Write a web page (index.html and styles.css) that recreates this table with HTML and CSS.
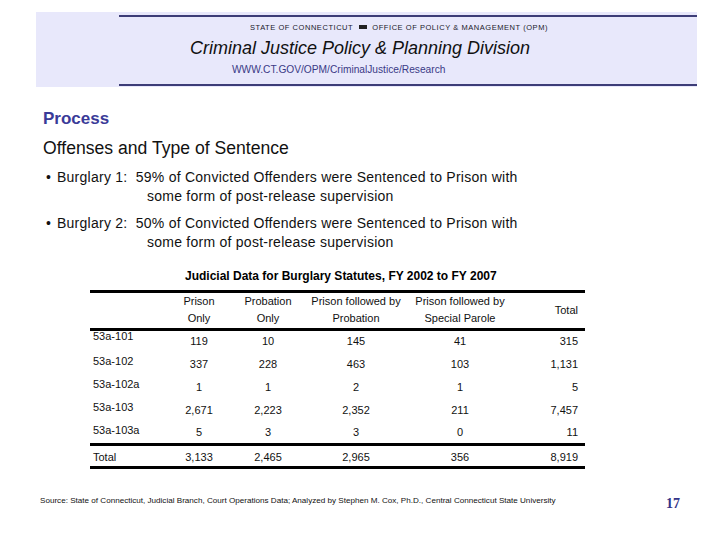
FILE: index.html
```html
<!DOCTYPE html>
<html>
<head>
<meta charset="utf-8">
<link rel="stylesheet" href="styles.css">
</head>
<body>
<div class="slide">
  <header class="band">
    <div class="band-inner">
      <div class="agency">STATE OF CONNECTICUT <span class="sq"></span> OFFICE OF POLICY &amp; MANAGEMENT (OPM)</div>
      <div class="division">Criminal Justice Policy &amp; Planning Division</div>
      <div class="url">WWW.CT.GOV/OPM/CriminalJustice/Research</div>
    </div>
  </header>

  <main class="content">
    <h1 class="process">Process</h1>
    <h2 class="subtitle">Offenses and Type of Sentence</h2>
    <ul class="bullets">
      <li><span class="dot">•</span><span class="btext">Burglary 1:&nbsp; 59% of Convicted Offenders were Sentenced to Prison with<br><span class="cont">some form of post-release supervision</span></span></li>
      <li><span class="dot">•</span><span class="btext">Burglary 2:&nbsp; 50% of Convicted Offenders were Sentenced to Prison with<br><span class="cont">some form of post-release supervision</span></span></li>
    </ul>

    <div class="table-title">Judicial Data for Burglary Statutes, FY 2002 to FY 2007</div>
    <table class="data">
      <colgroup>
        <col class="c1"><col class="c2"><col class="c3"><col class="c4"><col class="c5"><col class="c6">
      </colgroup>
      <thead>
        <tr>
          <th></th>
          <th>Prison<br>Only</th>
          <th>Probation<br>Only</th>
          <th>Prison followed by<br>Probation</th>
          <th>Prison followed by<br>Special Parole</th>
          <th class="tot">Total</th>
        </tr>
      </thead>
      <tbody>
        <tr class="first"><td class="lbl">53a-101</td><td>119</td><td>10</td><td>145</td><td>41</td><td class="tot">315</td></tr>
        <tr><td class="lbl">53a-102</td><td>337</td><td>228</td><td>463</td><td>103</td><td class="tot">1,131</td></tr>
        <tr><td class="lbl">53a-102a</td><td>1</td><td>1</td><td>2</td><td>1</td><td class="tot">5</td></tr>
        <tr><td class="lbl">53a-103</td><td>2,671</td><td>2,223</td><td>2,352</td><td>211</td><td class="tot">7,457</td></tr>
        <tr><td class="lbl">53a-103a</td><td>5</td><td>3</td><td>3</td><td>0</td><td class="tot">11</td></tr>
      </tbody>
      <tfoot>
        <tr><td class="lbl total-lbl">Total</td><td>3,133</td><td>2,465</td><td>2,965</td><td>356</td><td class="tot">8,919</td></tr>
      </tfoot>
    </table>
  </main>

  <footer class="foot">
    <div class="source">Source: State of Connecticut, Judicial Branch, Court Operations Data; Analyzed by Stephen M. Cox, Ph.D., Central Connecticut State University</div>
    <div class="page">17</div>
  </footer>
</div>
</body>
</html>
```

FILE: styles.css
```css
html, body {
  margin: 0;
  padding: 0;
  background: #ffffff;
}

.slide {
  width: 720px;
  height: 540px;
  position: relative;
  padding-top: 12px;
  box-sizing: border-box;
  font-family: "Liberation Sans", Arial, sans-serif;
  color: #111;
}

/* header band */
.band {
  margin: 0 0 0 36px;
  width: 661px;
  height: 75px;
  background: #e8e8fb;
  padding-top: 3px;
  box-sizing: border-box;
}

.band-inner {
  margin-left: 83px;
  border-top: 2px solid #3d3d77;
  border-bottom: 2px solid #3d3d77;
  height: 71px;
  box-sizing: border-box;
  display: flex;
  flex-direction: column;
  align-items: flex-start;
}

.agency {
  margin: 6px 0 0 131px;
  font-size: 7.5px;
  line-height: 10px;
  letter-spacing: 0.55px;
  color: #1a1a2a;
  white-space: nowrap;
}

.sq {
  display: inline-block;
  width: 8px;
  height: 4px;
  background: #222;
  vertical-align: 1px;
  margin: 0 3px;
}

.division {
  margin: 4px 0 0 71px;
  font-size: 18px;
  line-height: 22px;
  font-style: italic;
  color: #111;
  white-space: nowrap;
}

.url {
  margin: 4px 0 0 113px;
  font-size: 10.2px;
  line-height: 14px;
  color: #3a3a86;
  white-space: nowrap;
}

/* content */
.content {
  padding-left: 43px;
}

.process {
  margin: 21px 0 0 0;
  font-size: 17px;
  line-height: 22px;
  font-weight: bold;
  color: #3a3a98;
}

.subtitle {
  margin: 7px 0 0 0;
  font-size: 17.6px;
  line-height: 22px;
  font-weight: normal;
  color: #111;
}

.bullets {
  list-style: none;
  margin: 9px 0 0 0;
  padding: 0;
}

.bullets li {
  display: flex;
  font-size: 14px;
  line-height: 19px;
  margin-bottom: 8px;
  color: #111;
}

.dot {
  width: 14px;
  padding-left: 3px;
  box-sizing: border-box;
  flex: none;
}

.btext {
  white-space: nowrap;
  letter-spacing: 0.25px;
}

.cont {
  padding-left: 90px;
}

.table-title {
  margin: 17px 0 0 142px;
  font-size: 12px;
  line-height: 14px;
  font-weight: bold;
  color: #000;
}

.data {
  margin: 7px 0 0 47px;
  border-collapse: collapse;
  table-layout: fixed;
  width: 495px;
  font-size: 11px;
  color: #111;
  border-top: 3px solid #000;
  border-bottom: 3px solid #000;
}

.c1 { width: 75px; }
.c2 { width: 68px; }
.c3 { width: 70px; }
.c4 { width: 106px; }
.c5 { width: 102px; }
.c6 { width: 74px; }

.data th {
  font-weight: normal;
  line-height: 17px;
  padding: 0 0 1px 0;
  text-align: center;
  vertical-align: middle;
  border-bottom: 3px solid #000;
  height: 34px;
  box-sizing: border-box;
}

.data td {
  text-align: center;
  vertical-align: middle;
  height: 23px;
  line-height: 14px;
  padding: 1px 0 2px 0;
  box-sizing: border-box;
}

.data .tot {
  text-align: right;
  padding-right: 7px;
}

.data td.lbl {
  text-align: left;
  vertical-align: top;
  line-height: 13px;
  padding: 2px 0 0 3px;
}

.data tr.first td.lbl {
  line-height: 11px;
  padding-top: 0;
}

.data tfoot td {
  border-top: 3px solid #000;
  vertical-align: middle;
  padding: 1px 0 0 0;
}

.data tfoot td.tot {
  padding-right: 7px;
}

.data tfoot td.total-lbl {
  vertical-align: middle;
  line-height: 14px;
  padding: 1px 0 0 3px;
}

/* footer */
.foot {
  position: absolute;
  left: 40px;
  right: 40px;
  top: 495px;
  display: flex;
  justify-content: space-between;
  align-items: flex-start;
}

.source {
  font-size: 8.1px;
  line-height: 12px;
  color: #111;
  white-space: nowrap;
}

.page {
  font-family: "Liberation Serif", "Times New Roman", serif;
  font-weight: bold;
  font-size: 14px;
  line-height: 18px;
  margin-top: 0;
  color: #333388;
}
```
